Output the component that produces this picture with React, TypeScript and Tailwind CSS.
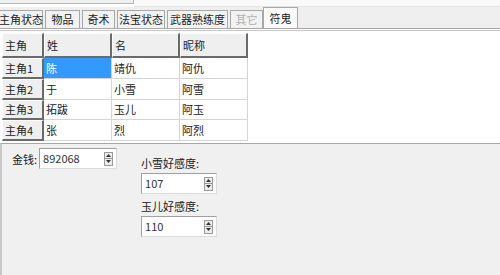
import React from "react";

const font = { fontFamily: '"Noto Sans CJK SC", "Noto Sans", sans-serif' };

function Tab({ label, w, disabled, selected }: { label: string; w: number; disabled?: boolean; selected?: boolean }) {
  return (
    <div
      className={
        "flex items-center justify-center whitespace-nowrap border border-b-0 border-[#a8a8a8] text-[11px] leading-none " +
        (selected ? "h-[21px] bg-[#fafafa] " : "h-[18px] bg-[#f2f2f2] ") +
        (disabled ? "text-[#b0b0b0]" : "text-[#222]")
      }
      style={{ width: w }}
    >
      {label}
    </div>
  );
}

function Spin({ value, w }: { value: string; w: number }) {
  return (
    <div
      className="flex h-[21px] items-center justify-between border border-t-[#a0a0a0] border-l-[#a0a0a0] border-b-[#dcdcdc] border-r-[#dcdcdc] bg-white pl-[3px] pr-[3px]"
      style={{ width: w }}
    >
      <span className="text-[11px] leading-none text-[#333]">{value}</span>
      <div className="flex h-[14px] w-[9px] flex-col border border-[#9a9a9a] bg-[#ececec]">
        <div className="flex flex-1 items-center justify-center border-b border-[#9a9a9a]">
          <svg width="5" height="3" viewBox="0 0 5 3"><path d="M0 3 L2.5 0 L5 3 Z" fill="#333" /></svg>
        </div>
        <div className="flex flex-1 items-center justify-center">
          <svg width="5" height="3" viewBox="0 0 5 3"><path d="M0 0 L2.5 3 L5 0 Z" fill="#333" /></svg>
        </div>
      </div>
    </div>
  );
}

const headCell =
  "flex items-center whitespace-nowrap border-t border-l border-t-[#fdfdfd] border-l-[#fdfdfd] border-b-2 border-r-2 border-b-[#6a6a6a] border-r-[#6a6a6a] bg-[#efefef] pl-[2px] text-[11px] text-[#222]";
const bodyCell = "flex items-center whitespace-nowrap border-b border-r border-[#d4d4d4] pl-[2px] text-[11px]";

export default function App() {
  const rows = [
    ["主角1", "陈", "靖仇", "阿仇"],
    ["主角2", "于", "小雪", "阿雪"],
    ["主角3", "拓跋", "玉儿", "阿玉"],
    ["主角4", "张", "烈", "阿烈"],
  ];
  const heights = [21, 21, 20, 21];
  return (
    <div className="flex h-[275px] w-[500px] flex-col overflow-hidden bg-[#f0f0f0]" style={font}>
      <div className="flex h-[7px] bg-white">
        <div className="h-[4px] w-[134px] border-b border-r border-[#b8b8b8] bg-[#f0f0f0]" />
        <div className="flex-1 border-b border-[#e4e4e4] bg-[#fafafa]" />
      </div>
      <div className="flex h-[21px] items-end bg-[#efefef]">
        <div className="-ml-px flex items-end gap-[2px]">
          <Tab label="主角状态" w={44} />
          <Tab label="物品" w={35} />
          <Tab label="奇术" w={33} />
          <Tab label="法宝状态" w={48} />
          <Tab label="武器熟练度" w={61} />
          <Tab label="其它" w={33} disabled />
        </div>
        <Tab label="符鬼" w={35} selected />
      </div>
      <div className="h-[3px] border-t border-b border-t-[#a8a8a8] border-b-[#c8c8c8] bg-white" />
      <div className="flex h-[112px] flex-col bg-white pl-[2px] pt-[2px]">
        <div className="grid w-[246px] grid-cols-[42px_68px_68px_68px]">
          <div className={headCell + " h-[25px]"}>主角</div>
          <div className={headCell + " h-[25px]"}>姓</div>
          <div className={headCell + " h-[25px]"}>名</div>
          <div className={headCell + " h-[25px]"}>昵称</div>
          {rows.map((r, i) => (
            <React.Fragment key={i}>
              <div className={headCell} style={{ height: heights[i] }}>{r[0]}</div>
              <div
                className={bodyCell + (i === 0 ? " bg-[#3399ff] text-white" : " bg-white text-[#222]")}
                style={{ height: heights[i] }}
              >
                {r[1]}
              </div>
              <div className={bodyCell + " bg-white text-[#222]"} style={{ height: heights[i] }}>{r[2]}</div>
              <div className={bodyCell + " bg-white text-[#222]"} style={{ height: heights[i] }}>{r[3]}</div>
            </React.Fragment>
          ))}
        </div>
      </div>
      <div className="flex flex-1 border-t border-l-2 border-t-[#a8a8a8] border-l-[#c8c8c8] bg-[#f0f0f0]">
        <div className="flex items-start gap-[2px] pl-[10px] pt-[4px]">
          <span className="mt-[3px] text-[11px] text-[#222]">金钱:</span>
          <Spin value="892068" w={78} />
        </div>
        <div className="ml-[24px] flex flex-col pt-[11px]">
          <span className="text-[11px] leading-[16px] text-[#222]">小雪好感度:</span>
          <div className="mt-[2px]">
            <Spin value="107" w={76} />
          </div>
          <span className="mt-[4px] text-[11px] leading-[16px] text-[#222]">玉儿好感度:</span>
          <div className="mt-[2px]">
            <Spin value="110" w={76} />
          </div>
        </div>
      </div>
    </div>
  );
}
